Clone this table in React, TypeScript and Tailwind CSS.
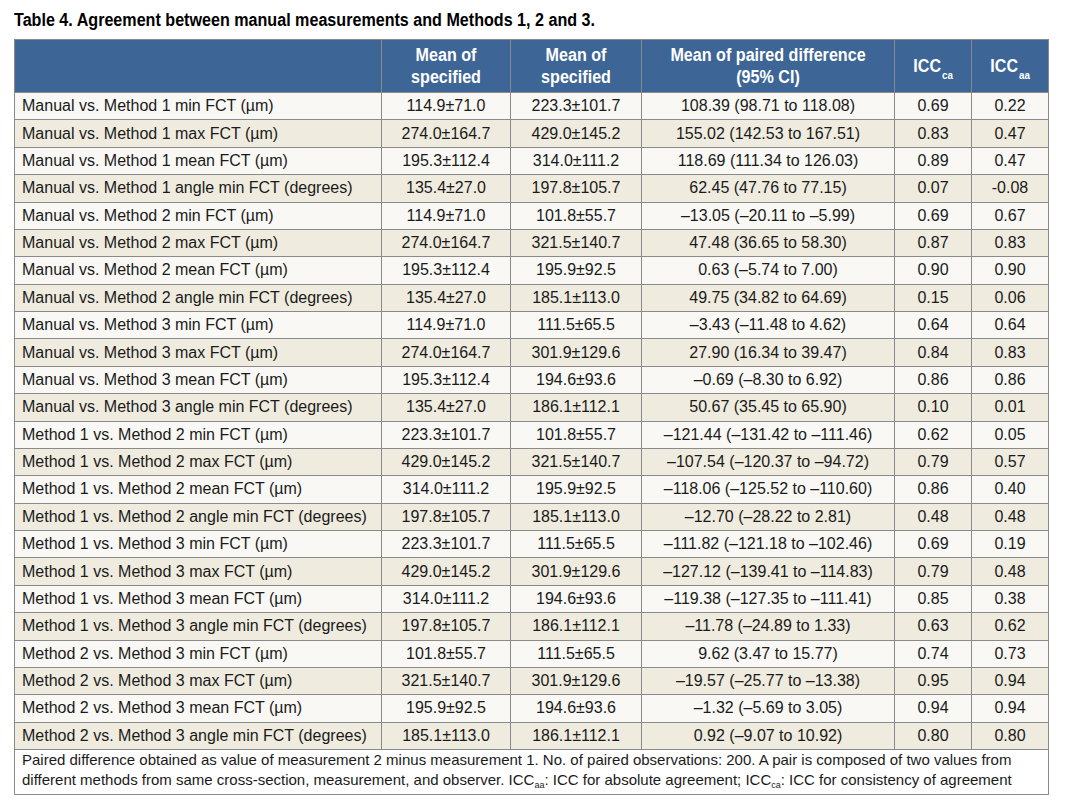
import React from "react";

const rows: string[][] = [
  ["Manual vs. Method 1 min FCT (µm)", "114.9±71.0", "223.3±101.7", "108.39 (98.71 to 118.08)", "0.69", "0.22"],
  ["Manual vs. Method 1 max FCT (µm)", "274.0±164.7", "429.0±145.2", "155.02 (142.53 to 167.51)", "0.83", "0.47"],
  ["Manual vs. Method 1 mean FCT (µm)", "195.3±112.4", "314.0±111.2", "118.69 (111.34 to 126.03)", "0.89", "0.47"],
  ["Manual vs. Method 1 angle min FCT (degrees)", "135.4±27.0", "197.8±105.7", "62.45 (47.76 to 77.15)", "0.07", "-0.08"],
  ["Manual vs. Method 2 min FCT (µm)", "114.9±71.0", "101.8±55.7", "–13.05 (–20.11 to –5.99)", "0.69", "0.67"],
  ["Manual vs. Method 2 max FCT (µm)", "274.0±164.7", "321.5±140.7", "47.48 (36.65 to 58.30)", "0.87", "0.83"],
  ["Manual vs. Method 2 mean FCT (µm)", "195.3±112.4", "195.9±92.5", "0.63 (–5.74 to 7.00)", "0.90", "0.90"],
  ["Manual vs. Method 2 angle min FCT (degrees)", "135.4±27.0", "185.1±113.0", "49.75 (34.82 to 64.69)", "0.15", "0.06"],
  ["Manual vs. Method 3 min FCT (µm)", "114.9±71.0", "111.5±65.5", "–3.43 (–11.48 to 4.62)", "0.64", "0.64"],
  ["Manual vs. Method 3 max FCT (µm)", "274.0±164.7", "301.9±129.6", "27.90 (16.34 to 39.47)", "0.84", "0.83"],
  ["Manual vs. Method 3 mean FCT (µm)", "195.3±112.4", "194.6±93.6", "–0.69 (–8.30 to 6.92)", "0.86", "0.86"],
  ["Manual vs. Method 3 angle min FCT (degrees)", "135.4±27.0", "186.1±112.1", "50.67 (35.45 to 65.90)", "0.10", "0.01"],
  ["Method 1 vs. Method 2 min FCT (µm)", "223.3±101.7", "101.8±55.7", "–121.44 (–131.42 to –111.46)", "0.62", "0.05"],
  ["Method 1 vs. Method 2 max FCT (µm)", "429.0±145.2", "321.5±140.7", "–107.54 (–120.37 to –94.72)", "0.79", "0.57"],
  ["Method 1 vs. Method 2 mean FCT (µm)", "314.0±111.2", "195.9±92.5", "–118.06 (–125.52 to –110.60)", "0.86", "0.40"],
  ["Method 1 vs. Method 2 angle min FCT (degrees)", "197.8±105.7", "185.1±113.0", "–12.70 (–28.22 to 2.81)", "0.48", "0.48"],
  ["Method 1 vs. Method 3 min FCT (µm)", "223.3±101.7", "111.5±65.5", "–111.82 (–121.18 to –102.46)", "0.69", "0.19"],
  ["Method 1 vs. Method 3 max FCT (µm)", "429.0±145.2", "301.9±129.6", "–127.12 (–139.41 to –114.83)", "0.79", "0.48"],
  ["Method 1 vs. Method 3 mean FCT (µm)", "314.0±111.2", "194.6±93.6", "–119.38 (–127.35 to –111.41)", "0.85", "0.38"],
  ["Method 1 vs. Method 3 angle min FCT (degrees)", "197.8±105.7", "186.1±112.1", "–11.78 (–24.89 to 1.33)", "0.63", "0.62"],
  ["Method 2 vs. Method 3 min FCT (µm)", "101.8±55.7", "111.5±65.5", "9.62 (3.47 to 15.77)", "0.74", "0.73"],
  ["Method 2 vs. Method 3 max FCT (µm)", "321.5±140.7", "301.9±129.6", "–19.57 (–25.77 to –13.38)", "0.95", "0.94"],
  ["Method 2 vs. Method 3 mean FCT (µm)", "195.9±92.5", "194.6±93.6", "–1.32 (–5.69 to 3.05)", "0.94", "0.94"],
  ["Method 2 vs. Method 3 angle min FCT (degrees)", "185.1±113.0", "186.1±112.1", "0.92 (–9.07 to 10.92)", "0.80", "0.80"],
];

function HeadText({ children }: { children: React.ReactNode }) {
  return <span className="inline-block scale-x-[0.895] whitespace-nowrap">{children}</span>;
}

export default function App() {
  return (
    <div className="bg-white w-[1065px] h-[812px] pl-[14px] pt-[8px] font-['Liberation_Sans',Arial,sans-serif] text-[#1a1a1a]">
      <h1 className="font-bold text-[18px] leading-[24px] text-black whitespace-nowrap">
        <span className="inline-block origin-left scale-x-[0.895]">
          Table 4. Agreement between manual measurements and Methods 1, 2 and 3.
        </span>
      </h1>
      <table className="mt-[7px] w-[1034px] table-fixed border-collapse border border-[#8a8a8a]">
        <colgroup>
          <col className="w-[367px]" />
          <col className="w-[129px]" />
          <col className="w-[131px]" />
          <col className="w-[253px]" />
          <col className="w-[77px]" />
          <col className="w-[77px]" />
        </colgroup>
        <thead>
          <tr className="h-[53px] bg-[#3d6596] text-white font-bold text-[18px] leading-[22px]">
            <th className="border border-[#8a8a8a]"></th>
            <th className="border border-[#8a8a8a] font-bold">
              <HeadText>Mean of<br />specified</HeadText>
            </th>
            <th className="border border-[#8a8a8a] font-bold">
              <HeadText>Mean of<br />specified</HeadText>
            </th>
            <th className="border border-[#8a8a8a] font-bold">
              <HeadText>Mean of paired difference<br />(95% CI)</HeadText>
            </th>
            <th className="border border-[#8a8a8a] font-bold">
              <HeadText>
                ICC<span className="text-[11px] leading-none relative top-[7px] ml-[1px]">ca</span>
              </HeadText>
            </th>
            <th className="border border-[#8a8a8a] font-bold">
              <HeadText>
                ICC<span className="text-[11px] leading-none relative top-[7px] ml-[1px]">aa</span>
              </HeadText>
            </th>
          </tr>
        </thead>
        <tbody className="text-[16px] leading-[20px]">
          {rows.map((r, i) => (
            <tr key={i} className={`h-[27.375px] ${i % 2 === 0 ? "bg-[#f9f8f4]" : "bg-[#efecdf]"}`}>
              <td className="border border-[#8a8a8a] pl-[7px] text-left whitespace-nowrap">{r[0]}</td>
              {r.slice(1).map((c, j) => (
                <td key={j} className="border border-[#8a8a8a] text-center whitespace-nowrap">{c}</td>
              ))}
            </tr>
          ))}
          <tr className="bg-white">
            <td colSpan={6} className="border border-[#8a8a8a] pl-[7px] pr-[2px] pt-0 pb-[4px] text-[15px] leading-[20px] whitespace-nowrap">
              Paired difference obtained as value of measurement 2 minus measurement 1. No. of paired observations: 200. A pair is composed of two values from
              <br />
              different methods from same cross-section, measurement, and observer. ICC
              <span className="text-[9px] leading-none relative top-[3px]">aa</span>: ICC for absolute agreement; ICC
              <span className="text-[9px] leading-none relative top-[3px]">ca</span>: ICC for consistency of agreement
            </td>
          </tr>
        </tbody>
      </table>
    </div>
  );
}
